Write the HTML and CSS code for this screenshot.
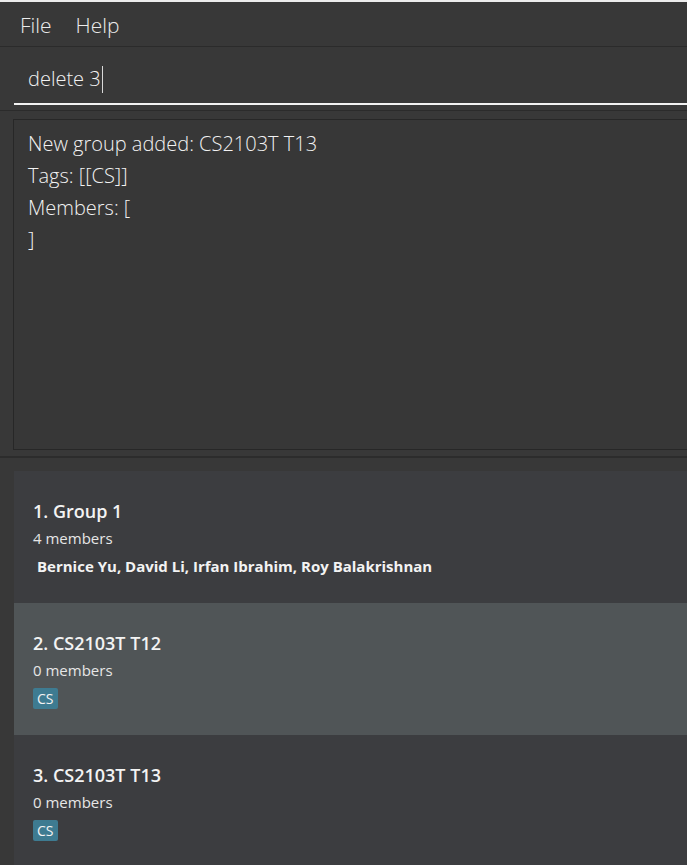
FILE: index.html
```html
<!DOCTYPE html>
<html>
<head>
<meta charset="utf-8">
<link rel="stylesheet" href="styles.css">
</head>
<body>
<div class="app">
  <div class="topline"></div>
  <div class="menubar">
    <span class="menu-item">File</span>
    <span class="menu-item">Help</span>
  </div>
  <div class="command-panel">
    <div class="command-box">
      <span class="command-text">delete 3</span><span class="caret"></span>
    </div>
  </div>
  <div class="result-panel">
    <div class="result-box">
      <div class="result-line">New group added: CS2103T T13</div>
      <div class="result-line">Tags: [[CS]]</div>
      <div class="result-line">Members: [</div>
      <div class="result-line">]</div>
    </div>
  </div>
  <div class="list-panel">
    <div class="card">
      <div class="card-title">1. Group 1</div>
      <div class="card-count">4 members</div>
      <div class="card-names">Bernice Yu, David Li, Irfan Ibrahim, Roy Balakrishnan</div>
    </div>
    <div class="card selected">
      <div class="card-title">2. CS2103T T12</div>
      <div class="card-count">0 members</div>
      <div class="tags"><span class="tag">CS</span></div>
    </div>
    <div class="card">
      <div class="card-title">3. CS2103T T13</div>
      <div class="card-count">0 members</div>
      <div class="tags"><span class="tag">CS</span></div>
    </div>
  </div>
</div>
</body>
</html>
```
FILE: styles.css
```css
html, body {
  margin: 0;
  padding: 0;
  background: #383838;
  overflow: hidden;
}
.app {
  width: 687px;
  height: 865px;
  overflow: hidden;
  font-family: "Open Sans", "Noto Sans", sans-serif;
  color: #f0f0f0;
}
.topline {
  height: 2px;
  background: #ececec;
}
.menubar {
  height: 44px;
  background: #383838;
  border-bottom: 1px solid #2b2b2b;
  display: flex;
  align-items: center;
  padding-left: 20px;
  gap: 24px;
}
.menu-item {
  font-size: 21px;
  font-weight: 300;
  color: #ececec;
  line-height: 24px;
  padding-top: 1px;
}
.command-panel {
  height: 64px;
  background: #383838;
  border-bottom: 1px solid #2b2b2b;
  padding-left: 14px;
  box-sizing: border-box;
}
.command-box {
  height: 58px;
  border-bottom: 2px solid #f2f2f2;
  display: flex;
  align-items: center;
  padding-left: 14px;
  padding-top: 8px;
  box-sizing: border-box;
}
.command-text {
  font-size: 20px;
  font-weight: 300;
  color: #f2f2f2;
  line-height: 26px;
}
.caret {
  display: inline-block;
  width: 1px;
  height: 27px;
  background: #d8d8d8;
  margin-left: 1px;
}
.result-panel {
  background: #383838;
  padding: 8px 0 6px 13px;
  border-bottom: 2px solid #2c2c2c;
}
.result-box {
  height: 331px;
  box-sizing: border-box;
  border: 1px solid #272727;
  border-right: none;
  background: #373737;
  padding: 8px 0 0 14px;
}
.result-line {
  font-size: 20px;
  font-weight: 300;
  line-height: 32px;
  color: #f2f2f2;
}
.list-panel {
  background: #383838;
  padding: 13px 0 0 14px;
  display: flex;
  flex-direction: column;
}
.card {
  height: 132px;
  box-sizing: border-box;
  background: #3c3d40;
  padding: 28px 0 0 19px;
}
.card.selected {
  background: #505557;
}
.card-title {
  font-size: 18px;
  font-weight: 600;
  color: #f3f3f3;
  line-height: 24px;
}
.card-count {
  font-size: 15px;
  color: #e6e6e6;
  line-height: 20px;
  margin-top: 5px;
}
.card-names {
  font-size: 15px;
  font-weight: 700;
  color: #f3f3f3;
  line-height: 20px;
  margin-top: 8px;
  padding-left: 4px;
}
.tags {
  margin-top: 8px;
  display: flex;
}
.tag {
  background: #3e7b91;
  color: #f3f3f3;
  font-size: 14px;
  line-height: 21px;
  padding: 0 4px;
  border-radius: 2px;
}
```
